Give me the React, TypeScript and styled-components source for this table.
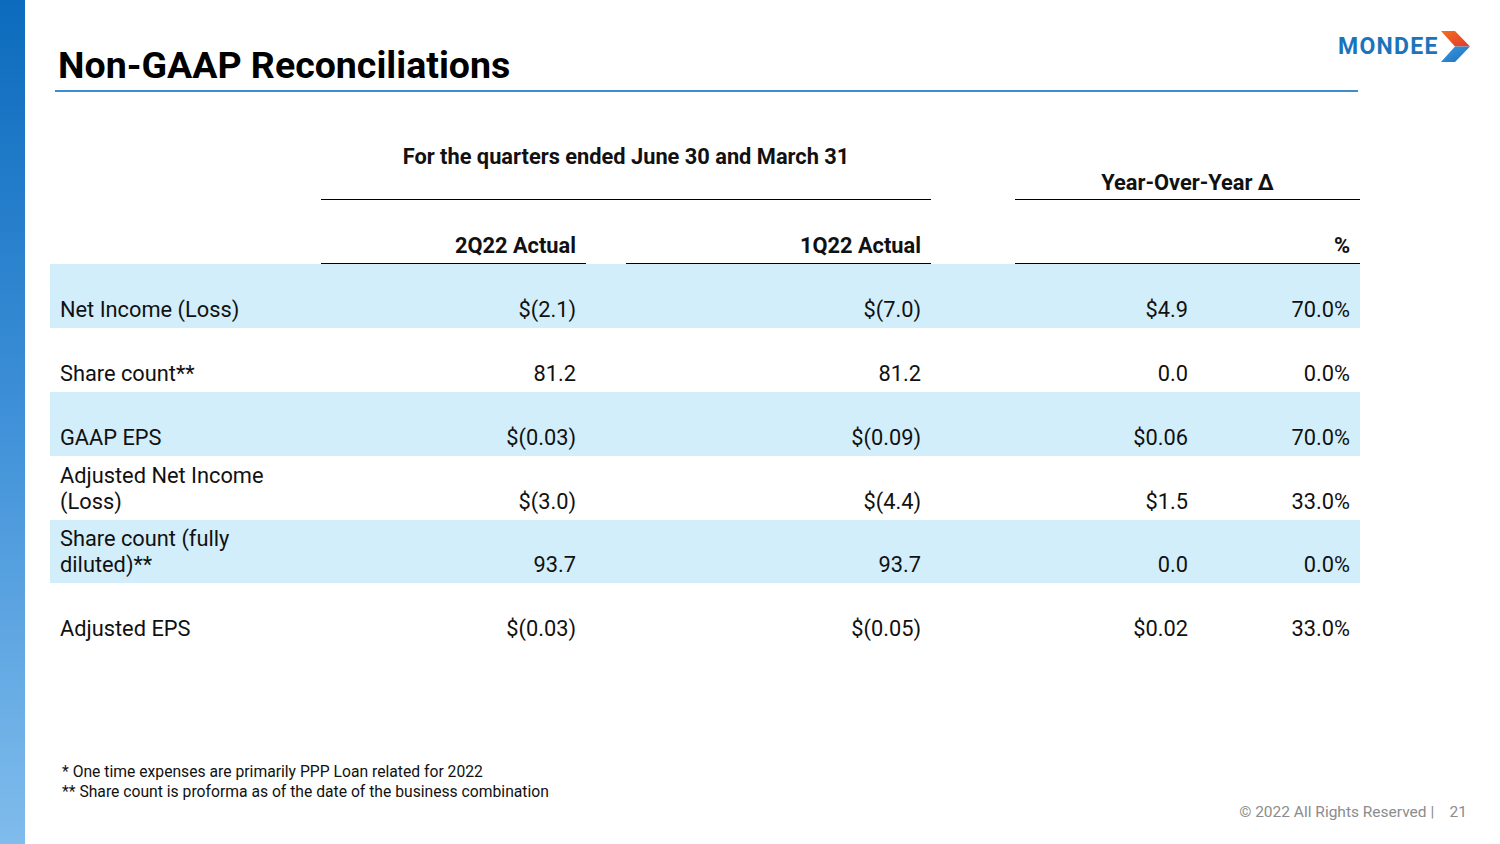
import React, { FC } from "react"
import styled, { createGlobalStyle } from "styled-components"

const GlobalStyle = createGlobalStyle`
  html, body {
    margin: 0;
    padding: 0;
    background: #ffffff;
  }
  body {
    font-family: Roboto, "Liberation Sans", sans-serif;
    color: #111111;
  }
`

const COLS = "271px 265px 40px 305px 84px 183px 162px"

const StyledSlide = styled.div`
  display: flex;
  width: 1500px;
  height: 844px;
  overflow: hidden;
`

const StyledSidebar = styled.div`
  width: 25px;
  flex-shrink: 0;
  background: linear-gradient(to bottom, #0c6bbd 0%, #3f91d8 50%, #80bcec 100%);
`

const StyledMain = styled.div`
  flex: 1;
  display: flex;
  flex-direction: column;
`

const StyledHeader = styled.div`
  display: flex;
  align-items: flex-start;
  padding-left: 30px;
`

const StyledTitleBlock = styled.div`
  width: 1303px;
  padding: 43px 0 3px 3px;
  border-bottom: 2px solid #3c8dcf;
  box-sizing: border-box;
`

const StyledTitle = styled.h1`
  margin: 0;
  font-size: 37.5px;
  line-height: 44px;
  font-weight: 700;
  color: #000000;
`

const StyledLogo = styled.div`
  display: flex;
  align-items: center;
  margin: 31px 0 0 -20px;
`

const StyledLogoText = styled.span`
  font-size: 23px;
  font-weight: 700;
  letter-spacing: 1.3px;
  color: #1b74bb;
  line-height: 30px;
`

const StyledTable = styled.div`
  margin: 28px 0 0 25px;
  width: 1310px;
`

const StyledRow = styled.div<{ $shaded?: boolean; $height: number }>`
  display: grid;
  grid-template-columns: ${COLS};
  height: ${(p) => p.$height}px;
  background: ${(p) => (p.$shaded ? "#d2eefb" : "#ffffff")};
`

const StyledCell = styled.div<{
  $align?: "left" | "right" | "center"
  $span?: number
  $rule?: boolean
  $bold?: boolean
  $pb?: number
}>`
  grid-column: span ${(p) => p.$span || 1};
  display: flex;
  flex-direction: column;
  justify-content: flex-end;
  text-align: ${(p) => p.$align || "right"};
  padding: 0 10px ${(p) => (p.$pb !== undefined ? p.$pb : 5)}px;
  font-size: 21.8px;
  font-weight: ${(p) => (p.$bold ? 700 : 400)};
  line-height: 26px;
  border-bottom: ${(p) => (p.$rule ? "1px solid #000000" : "none")};
  box-sizing: border-box;
`

const StyledFooter = styled.div`
  margin-top: auto;
  display: flex;
  justify-content: space-between;
  align-items: flex-end;
  padding: 0 33px 22px 37px;
`

const StyledNotes = styled.div`
  font-size: 15.7px;
  line-height: 20px;
  margin-bottom: 20px;
`

const StyledCopyright = styled.div`
  font-size: 15.5px;
  line-height: 20px;
  color: #8c8c8c;
  white-space: pre;
`

const Chevron: FC = () => (
  <svg width="31" height="31" viewBox="0 0 31 31">
    <defs>
      <linearGradient id="chevTop" x1="0" y1="0" x2="1" y2="1">
        <stop offset="0" stopColor="#f36f21" />
        <stop offset="1" stopColor="#e2382c" />
      </linearGradient>
      <linearGradient id="chevBot" x1="0" y1="0" x2="1" y2="1">
        <stop offset="0" stopColor="#3a9be0" />
        <stop offset="1" stopColor="#1b6fbe" />
      </linearGradient>
    </defs>
    <polygon points="2,0 16,0 31,15.5 16,15.5" fill="url(#chevTop)" />
    <polygon points="16,15.5 31,15.5 16,31 2,31" fill="url(#chevBot)" />
  </svg>
)

type DataRow = {
  label: React.ReactNode
  q2: string
  q1: string
  diff: string
  pct: string
}

const rows: DataRow[] = [
  { label: "Net Income (Loss)", q2: "$(2.1)", q1: "$(7.0)", diff: "$4.9", pct: "70.0%" },
  { label: "Share count**", q2: "81.2", q1: "81.2", diff: "0.0", pct: "0.0%" },
  { label: "GAAP EPS", q2: "$(0.03)", q1: "$(0.09)", diff: "$0.06", pct: "70.0%" },
  {
    label: (
      <>
        Adjusted Net Income
        <br />
        (Loss)
      </>
    ),
    q2: "$(3.0)",
    q1: "$(4.4)",
    diff: "$1.5",
    pct: "33.0%",
  },
  {
    label: (
      <>
        Share count (fully
        <br />
        diluted)**
      </>
    ),
    q2: "93.7",
    q1: "93.7",
    diff: "0.0",
    pct: "0.0%",
  },
  { label: "Adjusted EPS", q2: "$(0.03)", q1: "$(0.05)", diff: "$0.02", pct: "33.0%" },
]

const App: FC = () => (
  <>
    <GlobalStyle />
    <StyledSlide>
      <StyledSidebar />
      <StyledMain>
        <StyledHeader>
          <StyledTitleBlock>
            <StyledTitle>Non-GAAP Reconciliations</StyledTitle>
          </StyledTitleBlock>
          <StyledLogo>
            <StyledLogoText>MONDEE</StyledLogoText>
            <Chevron />
          </StyledLogo>
        </StyledHeader>

        <StyledTable>
          <StyledRow $height={80}>
            <StyledCell />
            <StyledCell $span={3} $align="center" $bold $rule $pb={29}>
              For the quarters ended June 30 and March 31
            </StyledCell>
            <StyledCell />
            <StyledCell $span={2} $align="center" $bold $rule $pb={3}>
              Year-Over-Year Δ
            </StyledCell>
          </StyledRow>
          <StyledRow $height={64}>
            <StyledCell />
            <StyledCell $bold $rule $pb={4}>
              2Q22 Actual
            </StyledCell>
            <StyledCell />
            <StyledCell $bold $rule $pb={4}>
              1Q22 Actual
            </StyledCell>
            <StyledCell />
            <StyledCell $span={2} $bold $rule $pb={4}>
              %
            </StyledCell>
          </StyledRow>
          {rows.map((row, i) => (
            <StyledRow key={i} $height={i === 4 ? 63 : 64} $shaded={i % 2 === 0}>
              <StyledCell $align="left">{row.label}</StyledCell>
              <StyledCell>{row.q2}</StyledCell>
              <StyledCell />
              <StyledCell>{row.q1}</StyledCell>
              <StyledCell />
              <StyledCell>{row.diff}</StyledCell>
              <StyledCell>{row.pct}</StyledCell>
            </StyledRow>
          ))}
        </StyledTable>

        <StyledFooter>
          <StyledNotes>
            * One time expenses are primarily PPP Loan related for 2022
            <br />
            ** Share count is proforma as of the date of the business combination
          </StyledNotes>
          <StyledCopyright>{"© 2022 All Rights Reserved |    21"}</StyledCopyright>
        </StyledFooter>
      </StyledMain>
    </StyledSlide>
  </>
)

export default App
